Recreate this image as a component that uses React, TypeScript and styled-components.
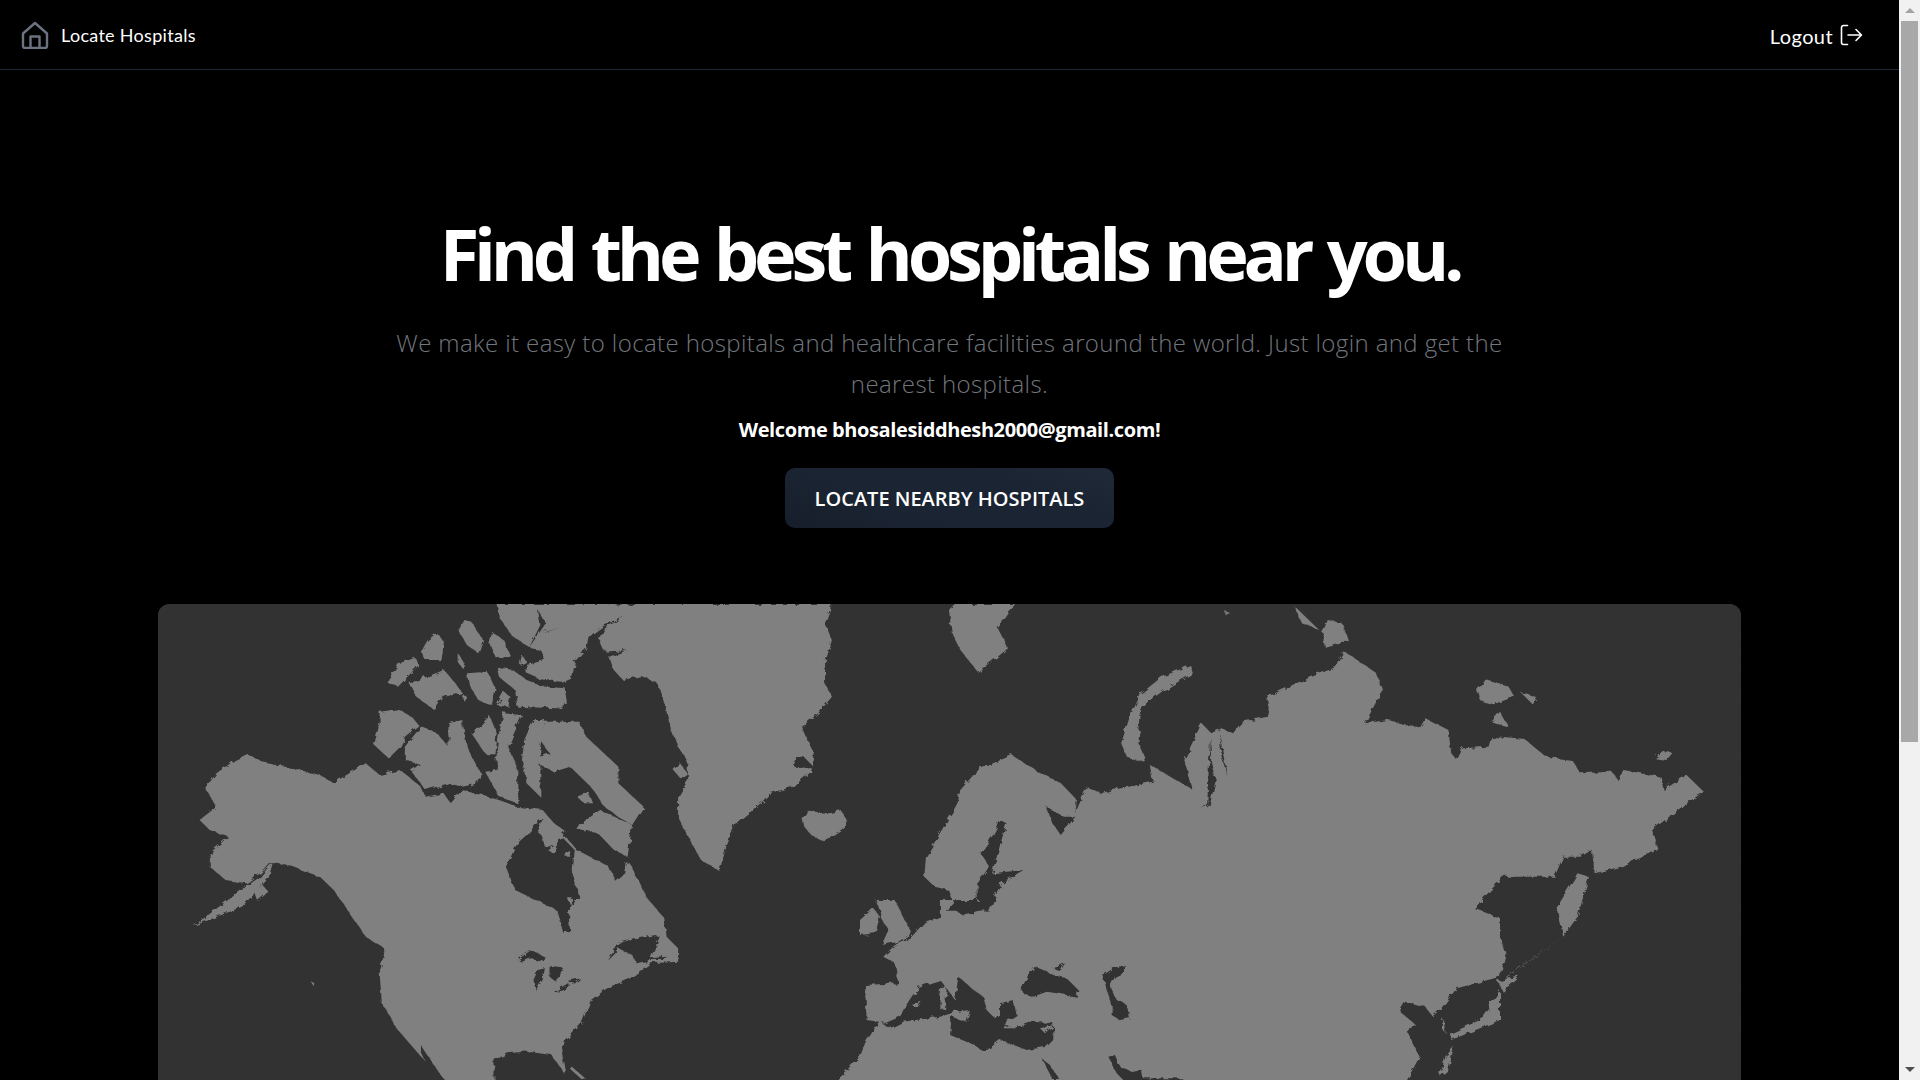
import React from "react";
import styled, { createGlobalStyle } from "styled-components";

const GlobalStyle = createGlobalStyle`
  html, body {
    margin: 0;
    padding: 0;
    background: #000;
    overflow: hidden;
  }
`;

// Traced coast data. Each list uses the scale of the crop it was traced from
type Shape = number[];

const northAmericaLand: Shape[] = [
  // mainland
  [212,492,250,518,310,535,370,555,400,578,470,520,500,555,545,540,590,590,600,620,640,610,655,640,680,600,720,615,760,630,800,650,855,660,930,780,1000,830,1045,820,1080,920,1120,985,1125,1040,1150,1075,1150,1115,1090,1120,1040,1170,1000,1190,960,1230,940,1300,895,1370,905,1455,875,1395,820,1385,780,1390,750,1410,750,1480,650,1480,590,1400,540,1320,505,1240,500,1150,510,1090,470,1040,440,980,400,900,370,860,300,825,265,815,250,840,210,880,165,870,130,830,130,790,170,740,130,720,108,690,145,650,120,595,145,550,185,510],
  // alaska peninsula and kodiak
  [268,815,258,865,200,950,95,1008,170,930,240,860],
  [228,905,245,885,258,905,235,932],
  // ellesmere
  [755,42,990,42,1055,45,1040,70,985,110,955,140,950,175,925,215,920,260,895,275,850,268,820,250,820,225,860,210,850,180,830,175,790,140,760,80],
  // greenland
  [1055,42,1485,42,1470,100,1485,150,1470,220,1470,280,1485,320,1455,370,1420,410,1445,490,1440,545,1400,590,1350,610,1330,640,1275,700,1255,770,1240,843,1200,810,1175,750,1150,680,1150,620,1172,570,1170,510,1150,470,1135,420,1120,340,1105,280,1070,258,1030,270,1010,240,1000,200,990,185,978,150,985,120,1020,90],
  // queen elizabeth islands
  [685,90,700,95,725,150,715,190,690,165,672,120],
  [605,150,625,128,640,155,635,210,600,210,590,185],
  [745,125,770,150,785,200,755,205,740,160],
  [810,195,820,215,805,225],
  [670,190,685,220,680,235,670,215],
  [575,200,585,225,540,290,515,275,545,215],
  [595,265,640,240,665,280,680,310,640,320,620,360,580,320,565,280],
  [690,250,735,245,750,290,745,345,715,330,695,285],
  [755,230,790,240,820,270,860,290,905,295,910,340,885,355,800,350,795,300,760,260],
  [770,305,785,320,780,350,755,345],
  [680,315,692,320,685,335],
  // banks, victoria, somerset, baffin
  [500,365,540,358,570,380,585,405,555,440,545,470,520,505,488,465,500,400],
  [555,470,590,410,625,430,650,470,650,400,680,390,690,470,720,550,715,580,680,590,650,580,600,600,570,545,590,525,555,510],
  [700,430,740,378,755,430,750,490,730,490],
  [770,370,810,375,780,470,800,530,800,640,760,620,730,545,755,540,755,480,760,430],
  [815,450,835,390,860,390,850,470,850,620,820,580,810,510],
  [860,395,935,395,950,440,1020,530,1020,580,1075,650,1050,705,1020,680,990,650,960,590,915,530,880,545,830,510,870,490,850,450],
  [925,715,980,660,1050,705,1040,800,1010,780,975,730],
  // iceland
  [1420,680,1445,665,1480,670,1505,660,1520,695,1510,720,1470,755,1440,735,1425,710],
  // hawaii speck, cuba
  [350,1174,358,1180,356,1188],
  [918,1430,950,1468,942,1470,916,1438],
];

const northAmericaWater: Shape[] = [
  // hudson bay and strait
  [775,830,800,760,820,735,855,680,850,720,860,770,900,745,925,780,920,850,935,920,910,960,915,1020,900,1028,885,960,840,930,795,900],
  [940,735,975,730,1010,780,1040,800,1035,850,1015,875,1000,830,960,790,925,780],
  // foxe basin
  [890,560,920,540,960,600,970,650,920,700,925,735,900,740,880,690,860,665],
  // gulf of st lawrence
  [995,1110,1010,1075,1030,1055,1100,1035,1110,1040,1090,1105,1125,1100,1120,1110,1090,1110,1060,1120,1050,1095,1020,1075],
  // great lakes
  [800,1110,830,1080,860,1100,860,1115,830,1105,810,1115],
  [845,1140,860,1135,855,1170,840,1200,835,1170],
  [870,1130,900,1135,895,1160,885,1175,870,1160],
  [880,1205,910,1180,915,1185,885,1207],
  [910,1172,938,1165,930,1175,915,1178],
  // pacific side
  [425,990,450,1010,445,1050,430,1030],
  [470,1040,510,1075,510,1090,480,1060],
  [590,1365,640,1470,620,1470,590,1385],
  // greenland fjords
  [985,185,1040,180,1000,200],
  [1400,525,1420,495,1445,530,1410,535],
  // ellesmere cracks
  [845,60,862,100,832,160,826,172,850,105],
  [890,115,855,130,862,125],
];

const northAmericaIslands: Shape[] = [
  [930,620,955,605,965,640,945,640],
  [840,720,870,690,905,725,880,770],
  [870,765,885,765,880,790,870,785],
  [905,785,912,780,915,800,905,800],
  [910,925,920,925,915,945],
  [1140,540,1155,520,1170,550,1155,565],
];

const eurasiaLand: Shape[] = [
  // russia and scandinavia
  [115,800,170,640,175,600,205,540,265,495,305,540,350,580,378,630,375,670,395,590,420,610,440,600,510,575,505,525,530,550,580,600,565,510,595,400,612,430,630,415,650,430,665,395,710,380,710,320,760,280,830,230,845,185,900,250,910,300,880,400,920,390,975,415,985,385,1025,420,1030,490,1040,510,1050,475,1095,470,1100,440,1160,450,1195,500,1240,510,1255,550,1310,545,1320,570,1330,540,1395,560,1400,600,1440,555,1470,605,1440,640,1380,720,1390,780,1325,830,1280,850,1275,780,1255,800,1225,800,1210,860,1120,860,1070,955,1115,985,1115,1040,1125,1090,1115,1160,1040,1195,1015,1250,1020,1330,985,1250,950,1235,940,1265,965,1300,955,1330,975,1400,950,1480,200,1480,200,985,135,985,165,950,155,900,130,890,112,860],
  // svalbard
  [155,60,165,42,270,42,255,80,240,115,258,175,240,200,205,245,175,180,160,130],
  // novaya zemlya
  [575,225,580,250,530,300,490,350,485,460,500,520,465,500,455,460,470,380,490,310,525,262],
  // severnaya and the small arctic islands
  [815,90,840,100,850,150,810,170,805,130],
  [755,45,785,95,800,120,770,100],
  [635,60,645,70,635,72],
  [1075,300,1090,270,1130,290,1140,320,1100,345,1080,330],
  [1150,305,1180,325,1170,340],
  [1100,395,1115,365,1130,410],
  [1385,505,1405,480,1415,490,1405,510],
];

const eurasiaWater: Shape[] = [
  // baltic
  [245,690,230,740,210,790,225,830,205,880,205,950,180,975,165,960,225,965,245,880,285,840,230,850,255,700],
  // white sea
  [325,650,355,680,375,680,350,735,335,700],
  // ob gulf
  [610,440,612,520,620,570,610,640,595,660,605,640],
  [625,420,640,560,630,500],
  // bay of korea side
  [1015,1250,1040,1195,1000,1360,985,1300],
];

const japanAndSakhalin: Shape[] = [
  [1215,950,1250,850,1270,860,1250,980,1225,1040],
  [1225,1040,1110,1180,1120,1170],
  [1110,1170,1150,1160,1120,1205],
  [1115,1200,1115,1290,1030,1350,1030,1330,1080,1290],
  [1020,1400,1035,1370,1025,1440,1010,1460],
];

const mediterraneanLand: Shape[] = [
  [300,50,255,65,215,110,170,130,130,170,165,190,175,250,75,255,80,360,117,365,75,430,60,470,0,530,0,560,1080,560,1080,0,300,0],
  // british isles
  [110,0,165,0,195,60,215,100,175,125,125,135,145,90,125,55],
  [60,60,100,25,120,50,105,100,60,105],
];

const mediterraneanWater: Shape[] = [
  // north sea coast south of scandinavia
  [320,35,350,0,455,0,440,30,380,45,350,35],
  [128,372,145,365,180,350,195,320,235,260,300,240,320,265,345,300,355,230,395,265,430,290,440,330,460,350,480,350,480,310,520,300,530,345,490,370,520,385,580,365,640,370,640,420,620,440,560,450,480,420,435,455,390,430,330,405,335,350,380,365,390,330,350,335,300,350,190,365,150,385],
  // black sea, azov, caspian
  [585,200,610,210,640,225,680,235,715,270,710,290,650,280,620,275,580,290,550,280,545,265,565,225],
  [640,205,675,190,660,215],
  [790,225,820,205,855,195,855,215,825,230,810,260,830,300,860,315,870,355,840,360,815,345,815,310,800,270],
  // red sea and gulf
  [605,475,630,495,660,540,640,540,615,495],
  [805,470,825,465,840,500,880,515,905,510,910,535,1030,535,1030,560,870,560,830,520],
];

const mediterraneanIslands: Shape[] = [
  [300,265,320,262,315,330,298,325],
  [215,315,245,305,230,325],
  [600,385,640,375,615,400],
  [490,375,530,385,490,385],
];

const points = (shape: Shape) => {
  const out: string[] = [];
  for (let i = 0; i < shape.length; i += 2) {
    out.push(shape[i] + "," + shape[i + 1]);
  }
  return out.join(" ");
};

const Coast: React.FC<{ shapes: Shape[]; fill: string }> = ({ shapes, fill }) => (
  <>
    {shapes.map((shape, i) => (
      <polygon key={i} points={points(shape)} fill={fill} />
    ))}
  </>
);

const LAND = "#808080";
const SEA = "#333333";

const WorldMap = () => (
  <MapDrawing viewBox="158 604 1583 476" preserveAspectRatio="none">
    <defs>
      <filter id="coast" x="0" y="0" width="100%" height="100%" filterUnits="objectBoundingBox">
        <feTurbulence type="fractalNoise" baseFrequency="0.14" numOctaves="3" seed="4" />
        <feDisplacementMap in="SourceGraphic" scale="6" />
      </filter>
    </defs>
    <rect x="158" y="604" width="1583" height="476" fill={SEA} />
    <g filter="url(#coast)">
      <rect x="158" y="604" width="1583" height="476" fill={SEA} />
      <g transform="translate(150 590) scale(0.4592 0.3333)">
        <Coast shapes={northAmericaLand} fill={LAND} />
      </g>
      <g transform="translate(860 590) scale(0.574 0.3333)">
        <Coast shapes={eurasiaLand} fill={LAND} />
      </g>
      <g transform="translate(840 900) scale(0.3333)">
        <Coast shapes={mediterraneanLand} fill={LAND} />
      </g>
      <g transform="translate(150 590) scale(0.4592 0.3333)">
        <Coast shapes={northAmericaWater} fill={SEA} />
        <Coast shapes={northAmericaIslands} fill={LAND} />
      </g>
      <g transform="translate(840 900) scale(0.3333)">
        <Coast shapes={mediterraneanWater} fill={SEA} />
        <Coast shapes={mediterraneanIslands} fill={LAND} />
      </g>
      <g transform="translate(860 590) scale(0.574 0.3333)">
        <Coast shapes={eurasiaWater} fill={SEA} />
        <Coast shapes={japanAndSakhalin} fill={LAND} />
      </g>
    </g>
  </MapDrawing>
);

const HomeIcon = () => (
  <svg width="28" height="28" viewBox="0 0 28 28" fill="none" stroke="#6b7280" strokeWidth="2.4" strokeLinejoin="round">
    <path d="M2 12.5 14 2l12 10.5V25a2 2 0 0 1-2 2H4a2 2 0 0 1-2-2Z" />
    <path d="M9.5 27V15.5h9V27" />
  </svg>
);

const LogoutIcon = () => (
  <svg width="24" height="24" viewBox="0 0 24 24" fill="none" stroke="#fff" strokeWidth="1.6" strokeLinecap="round" strokeLinejoin="round">
    <path d="M8.5 2.5H4.5a2 2 0 0 0-2 2v15a2 2 0 0 0 2 2h4" />
    <path d="M9 12h13.5M17 6.5l5.5 5.5-5.5 5.5" />
  </svg>
);

export default function App() {
  return (
    <>
      <GlobalStyle />
      <Frame>
        <Page>
          <Navbar>
            <Brand href="#">
              <HomeIcon />
              <BrandName>Locate Hospitals</BrandName>
            </Brand>
            <LogoutLink href="#">
              <LogoutLabel>Logout</LogoutLabel>
              <LogoutIcon />
            </LogoutLink>
          </Navbar>
          <Hero>
            <Title>Find the best hospitals near you.</Title>
            <Lead>
              We make it easy to locate hospitals and healthcare facilities around the world. Just login and get the nearest hospitals.
            </Lead>
            <Welcome>Welcome bhosalesiddhesh2000@gmail.com!</Welcome>
            <LocateButton type="button">Locate nearby hospitals</LocateButton>
          </Hero>
          <MapCard>
            <WorldMap />
          </MapCard>
        </Page>
        <ScrollRail>
          <ScrollArrow $up />
          <ScrollTrack>
            <ScrollThumb />
          </ScrollTrack>
          <ScrollArrow />
        </ScrollRail>
      </Frame>
    </>
  );
}

const Frame = styled.div`
  display: flex;
  height: 100vh;
  overflow: hidden;
  background: #000;
`;

const Page = styled.main`
  flex: 1;
  min-width: 0;
  overflow: hidden;
  display: flex;
  flex-direction: column;
  color: #fff;
`;

const Navbar = styled.nav`
  display: flex;
  justify-content: space-between;
  align-items: center;
  box-sizing: border-box;
  height: 70px;
  flex-shrink: 0;
  padding: 0 36px 0 21px;
  border-bottom: 1px solid #1f2937;
`;

const Brand = styled.a`
  display: flex;
  align-items: center;
  gap: 12px;
  color: #fff;
  text-decoration: none;
`;

const BrandName = styled.span`
  font-family: "Lato", sans-serif;
  font-size: 18px;
  letter-spacing: 0.3px;
`;

const LogoutLink = styled.a`
  display: flex;
  align-items: center;
  gap: 6px;
  color: #fff;
  text-decoration: none;
  font-family: "Lato", sans-serif;
  font-size: 20px;
  letter-spacing: 0.4px;
`;

const LogoutLabel = styled.span`
  padding-top: 3px;
`;

const Hero = styled.section`
  display: flex;
  flex-direction: column;
  align-items: center;
  padding-top: 143px;
  font-family: "Open Sans", sans-serif;
`;

const Title = styled.h1`
  margin: 0;
  font-size: 72px;
  line-height: 80px;
  font-weight: 700;
  letter-spacing: -5.2px;
  word-spacing: 4px;
  color: #fff;
`;

const Lead = styled.p`
  margin: 29px 0 0;
  width: 1152px;
  text-align: center;
  font-size: 24px;
  line-height: 41px;
  font-weight: 300;
  letter-spacing: 0.39px;
  color: #72767d;
`;

const Welcome = styled.p`
  margin: 12px 0 0;
  font-size: 20px;
  line-height: 28px;
  font-weight: 700;
  letter-spacing: -0.4px;
  color: #fff;
`;

const LocateButton = styled.button`
  box-sizing: border-box;
  width: 329px;
  height: 60px;
  margin-top: 24px;
  border: none;
  border-radius: 10px;
  background: linear-gradient(20deg, #161e2b 0%, #1b2432 35%, #1b2432 70%, #1f2937 100%);
  color: #fff;
  font-family: "Open Sans", sans-serif;
  font-size: 20px;
  font-weight: 600;
  letter-spacing: 0;
  text-transform: uppercase;
`;

const MapCard = styled.div`
  box-sizing: border-box;
  width: 1583px;
  margin: 76px auto 0;
  flex-shrink: 0;
  height: 476px;
  border-radius: 12px 12px 0 0;
  overflow: hidden;
  background: #333;
`;

const MapDrawing = styled.svg`
  display: block;
  width: 100%;
  height: 100%;
`;

const ScrollRail = styled.aside`
  flex: 0 0 21px;
  display: flex;
  flex-direction: column;
  background: #f1f1f1;
`;

const ScrollArrow = styled.div<{ $up?: boolean }>`
  flex: 0 0 21px;
  display: flex;
  align-items: center;
  justify-content: center;
  &::before {
    content: "";
    width: 0;
    height: 0;
    border-left: 5px solid transparent;
    border-right: 5px solid transparent;
    ${({ $up }) => ($up ? "border-bottom: 5px solid #a3a3a3;" : "border-top: 5px solid #505050;")}
  }
`;

const ScrollTrack = styled.div`
  flex: 1;
  padding: 0 2px;
`;

const ScrollThumb = styled.div`
  height: 721px;
  background: #a8a8a8;
`;
